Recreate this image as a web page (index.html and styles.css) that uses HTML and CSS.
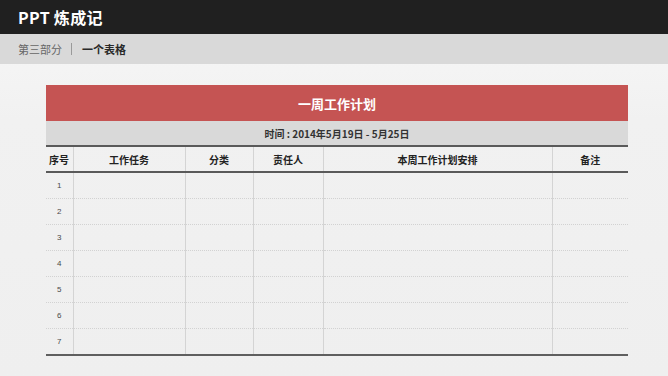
FILE: index.html
```html
<!DOCTYPE html>
<html lang="zh">
<head>
<meta charset="utf-8">
<title>PPT 炼成记 - 一个表格</title>
<link rel="stylesheet" href="styles.css">
</head>
<body>
  <header class="topbar">
    <h1 class="brand">PPT 炼成记</h1>
  </header>
  <nav class="crumbs">
    <span class="crumb-part">第三部分</span>
    <span class="crumb-sep"></span>
    <span class="crumb-current">一个表格</span>
  </nav>
  <main class="stage">
    <table class="plan">
      <colgroup>
        <col class="c-no">
        <col class="c-task">
        <col class="c-type">
        <col class="c-owner">
        <col class="c-plan">
        <col class="c-note">
      </colgroup>
      <thead>
        <tr class="title-row"><th colspan="6">一周工作计划</th></tr>
        <tr class="date-row"><th colspan="6">时间 : 2014年5月19日 - 5月25日</th></tr>
        <tr class="head-row">
          <th>序号</th>
          <th>工作任务</th>
          <th>分类</th>
          <th>责任人</th>
          <th>本周工作计划安排</th>
          <th>备注</th>
        </tr>
      </thead>
      <tbody>
        <tr><td class="num">1</td><td></td><td></td><td></td><td></td><td></td></tr>
        <tr><td class="num">2</td><td></td><td></td><td></td><td></td><td></td></tr>
        <tr><td class="num">3</td><td></td><td></td><td></td><td></td><td></td></tr>
        <tr><td class="num">4</td><td></td><td></td><td></td><td></td><td></td></tr>
        <tr><td class="num">5</td><td></td><td></td><td></td><td></td><td></td></tr>
        <tr><td class="num">6</td><td></td><td></td><td></td><td></td><td></td></tr>
        <tr><td class="num">7</td><td></td><td></td><td></td><td></td><td></td></tr>
      </tbody>
    </table>
  </main>
</body>
</html>
```
FILE: styles.css
```css
html, body {
  margin: 0;
  padding: 0;
}

body {
  width: 668px;
  height: 376px;
  overflow: hidden;
  font-family: "Noto Sans CJK SC", "Noto Sans", "Liberation Sans", sans-serif;
  background: linear-gradient(#f8f8f8 0, #f1f1f1 120px, #efefef 100%);
  color: #333;
}

.topbar {
  height: 34px;
  background: #202020;
  display: flex;
  align-items: center;
  padding-left: 18px;
}

.brand {
  margin: 0;
  font-size: 16px;
  font-weight: 700;
  color: #fff;
  letter-spacing: 0.3px;
  line-height: 1;
}

.crumbs {
  height: 30px;
  background: #d9d9d9;
  display: flex;
  align-items: center;
  padding-left: 18px;
  font-size: 11px;
}

.crumb-part {
  color: #666;
}

.crumb-sep {
  width: 1px;
  height: 12px;
  background: #9a9a9a;
  margin: 0 10px 0 9px;
}

.crumb-current {
  color: #2a2a2a;
  font-weight: 700;
}

.stage {
  padding: 21px 0 0 46px;
}

.plan {
  width: 582px;
  border-collapse: collapse;
  table-layout: fixed;
}

.c-no { width: 27px; }
.c-task { width: 112px; }
.c-type { width: 68px; }
.c-owner { width: 70px; }
.c-plan { width: 229px; }
.c-note { width: 76px; }

.plan th,
.plan td {
  padding: 0;
  text-align: center;
}

.title-row th {
  height: 36px;
  background: #c55453;
  color: #fff;
  font-size: 13px;
  font-weight: 700;
}

.date-row th {
  height: 24px;
  background: #d9d9d9;
  color: #333;
  font-size: 10px;
  font-weight: 700;
  border-bottom: 2px solid #5a5a5a;
}

.head-row th {
  height: 24px;
  font-size: 10px;
  font-weight: 700;
  color: #222;
  border-bottom: 2px solid #5a5a5a;
  border-left: 1px solid #d4d4d4;
}

.head-row th:first-child {
  border-left: none;
  text-align: left;
  padding-left: 3px;
}

.plan tbody td {
  height: 25px;
  border-left: 1px solid #d4d4d4;
  border-bottom: 1px dotted #d2d2d2;
}

.plan tbody td:first-child {
  border-left: none;
}

.plan tbody tr:last-child td {
  border-bottom: 2px solid #5f5f5f;
}

.plan td.num {
  font-family: "Liberation Sans", sans-serif;
  font-size: 8px;
  color: #4a4a4a;
  text-align: left;
  padding-left: 11px;
}
```
